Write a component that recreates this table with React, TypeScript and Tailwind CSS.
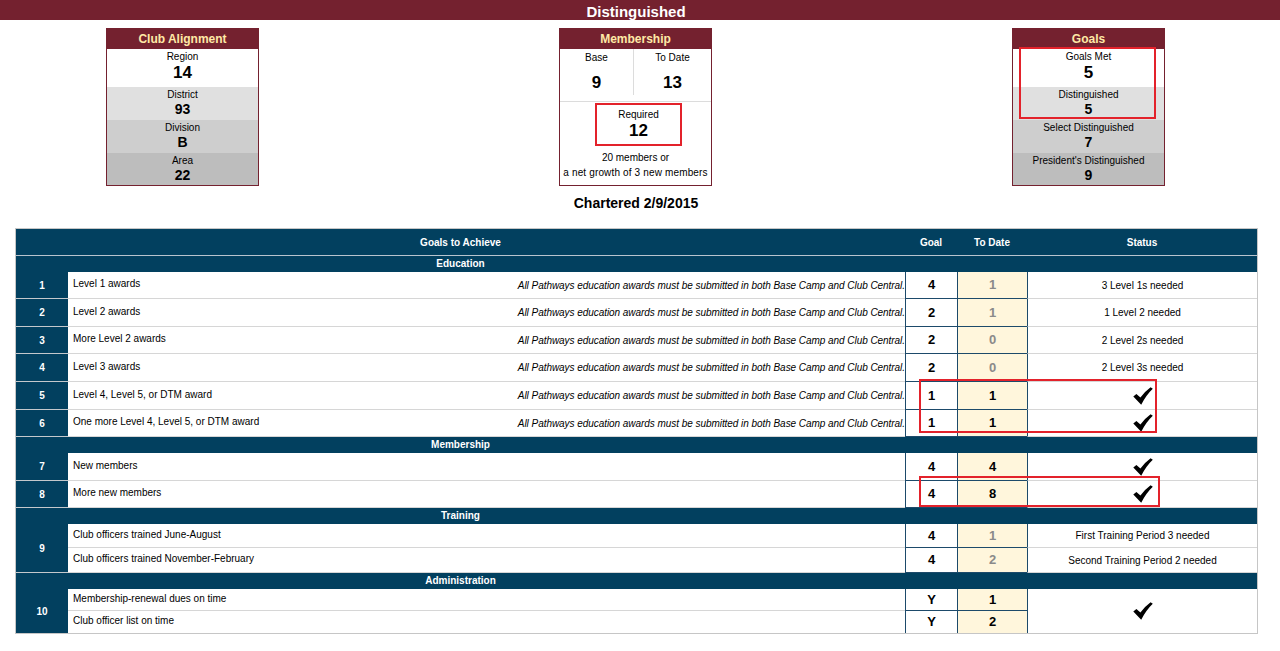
import React from "react";

const NAVY = "bg-[#02405f]";

function Check() {
  return (
    <svg width="20" height="18" viewBox="0 0 20 18" aria-hidden="true">
      <path d="M0.3 9.6 L3.4 6.9 L7.4 10.6 Q12 4.2 17.6 0.2 L19.8 1.8 Q13.2 8 8.2 17.8 Z" fill="#000" />
    </svg>
  );
}

const NOTE = "All Pathways education awards must be submitted in both Base Camp and Club Central.";

type RowData = {
  n: number;
  label: string;
  note?: boolean;
  goal: string;
  date: string;
  met: boolean;
  status: string | null;
  h: string;
};

const edu: RowData[] = [
  { n: 1, label: "Level 1 awards", note: true, goal: "4", date: "1", met: false, status: "3 Level 1s needed", h: "h-[27px]" },
  { n: 2, label: "Level 2 awards", note: true, goal: "2", date: "1", met: false, status: "1 Level 2 needed", h: "h-[28px]" },
  { n: 3, label: "More Level 2 awards", note: true, goal: "2", date: "0", met: false, status: "2 Level 2s needed", h: "h-[27px]" },
  { n: 4, label: "Level 3 awards", note: true, goal: "2", date: "0", met: false, status: "2 Level 3s needed", h: "h-[28px]" },
  { n: 5, label: "Level 4, Level 5, or DTM award", note: true, goal: "1", date: "1", met: true, status: null, h: "h-[28px]" },
  { n: 6, label: "One more Level 4, Level 5, or DTM award", note: true, goal: "1", date: "1", met: true, status: null, h: "h-[27px]" },
];

const mem: RowData[] = [
  { n: 7, label: "New members", goal: "4", date: "4", met: true, status: null, h: "h-[28px]" },
  { n: 8, label: "More new members", goal: "4", date: "8", met: true, status: null, h: "h-[27px]" },
];

function NumCell({ n }: { n: number }) {
  return (
    <div className={`w-[52px] shrink-0 ${NAVY} border-b border-[#c4c8cc] flex items-center justify-center text-white font-bold text-[10px]`}>
      {n}
    </div>
  );
}

function Desc({ label, note }: { label: string; note?: boolean }) {
  return (
    <div className="w-[837px] shrink-0 flex items-center justify-between border-b border-[#d6d6d6] overflow-hidden">
      <span className="pl-[5px] pb-[3px] text-[10px] whitespace-nowrap">{label}</span>
      {note && <span className="italic text-[10px] whitespace-nowrap tracking-[-0.05px]">{NOTE}</span>}
    </div>
  );
}

function GoalCells({ goal, date, met }: { goal: string; date: string; met: boolean }) {
  return (
    <>
      <div className="w-[52px] shrink-0 bg-white border-l border-b border-[#1d4a6a] flex items-center justify-center font-bold text-[13px]">
        {goal}
      </div>
      <div
        className={`w-[70px] shrink-0 bg-[#fff6dc] border-l border-b border-[#1d4a6a] flex items-center justify-center font-bold text-[13px] ${
          met ? "text-black" : "text-[#8a8a8a]"
        }`}
      >
        {date}
      </div>
    </>
  );
}

function Status({ status }: { status: string | null }) {
  return (
    <div className="w-[230px] shrink-0 border-l border-l-[#1d4a6a] border-b border-b-[#d6d6d6] flex items-center justify-center text-[10px]">
      {status ?? <Check />}
    </div>
  );
}

function Row({ r }: { r: RowData }) {
  return (
    <div className={`flex ${r.h}`}>
      <NumCell n={r.n} />
      <Desc label={r.label} note={r.note} />
      <GoalCells goal={r.goal} date={r.date} met={r.met} />
      <Status status={r.status} />
    </div>
  );
}

function Band({ title }: { title: string }) {
  return (
    <div className={`h-[16px] ${NAVY} flex`}>
      <div className="w-[889px] text-center text-white font-bold text-[10px] leading-[16px]">{title}</div>
    </div>
  );
}

function StatBox({
  title,
  rows,
  overlay,
}: {
  title: string;
  rows: { label: string; value: string; big?: boolean; bg: string; h: string }[];
  overlay?: boolean;
}) {
  return (
    <div className="relative w-[153px] border border-[#74212f] bg-white">
      <div className="h-[20px] bg-[#74212f] flex items-center justify-center text-[12px] font-bold text-[#ffe9a6]">
        {title}
      </div>
      {rows.map((r) => (
        <div key={r.label} className={`${r.h} ${r.bg} flex flex-col items-center pt-[2px]`}>
          <div className="text-[10px] leading-[12px]">{r.label}</div>
          {r.big ? (
            <div className="text-[17px] leading-[20px] font-bold">{r.value}</div>
          ) : (
            <div className="text-[14px] leading-[16px] font-bold">{r.value}</div>
          )}
        </div>
      ))}
      {overlay && (
        <div className="absolute left-[6px] top-[18px] w-[137px] h-[72px] border-2 border-[#e3222b]" />
      )}
    </div>
  );
}

export default function App() {
  return (
    <div className="w-[1280px] h-[651px] bg-white text-black overflow-hidden font-['Liberation_Sans',Arial,sans-serif]">
      <div className="h-[20px] bg-[#74212f] flex items-center justify-center pr-[8px] pt-[3px]">
        <span className="text-white font-bold text-[15px] leading-[18px]">Distinguished</span>
      </div>

      <div className="w-[1272px]">
        <div className="mt-[8px] flex justify-center gap-[300px] pr-[1px]">
          <StatBox
            title="Club Alignment"
            rows={[
              { label: "Region", value: "14", big: true, bg: "bg-white", h: "h-[38px]" },
              { label: "District", value: "93", bg: "bg-[#e0e0e0]", h: "h-[33px]" },
              { label: "Division", value: "B", bg: "bg-[#cecece]", h: "h-[33px]" },
              { label: "Area", value: "22", bg: "bg-[#bdbdbd]", h: "h-[32px]" },
            ]}
          />

          <div className="w-[153px] border border-[#74212f] bg-white">
            <div className="h-[20px] bg-[#74212f] flex items-center justify-center text-[12px] font-bold text-[#ffe9a6]">
              Membership
            </div>
            <div className="h-[53px] flex border-b border-[#dcdcdc]">
              <div className="w-[74px] h-[46px] border-r border-[#dcdcdc] flex flex-col items-center pt-[3px]">
                <div className="text-[10px] leading-[12px]">Base</div>
                <div className="mt-[9px] text-[17px] leading-[20px] font-bold">9</div>
              </div>
              <div className="flex-1 flex flex-col items-center pt-[3px]">
                <div className="text-[10px] leading-[12px]">To Date</div>
                <div className="mt-[9px] text-[17px] leading-[20px] font-bold">13</div>
              </div>
            </div>
            <div className="flex flex-col items-center">
              <div className="mt-[1px] ml-[6px] w-[87px] h-[43px] border-2 border-[#e3222b] flex flex-col items-center pt-[4px]">
                <div className="text-[10px] leading-[12px]">Required</div>
                <div className="text-[17px] leading-[20px] font-bold">12</div>
              </div>
              <div className="mt-[4px] text-[10px] leading-[15px]">20 members or</div>
              <div className="text-[10px] leading-[15px] tracking-[0.15px] whitespace-nowrap mb-[5px]">
                a net growth of 3 new members
              </div>
            </div>
          </div>

          <StatBox
            title="Goals"
            overlay
            rows={[
              { label: "Goals Met", value: "5", big: true, bg: "bg-white", h: "h-[38px]" },
              { label: "Distinguished", value: "5", bg: "bg-[#e0e0e0]", h: "h-[33px]" },
              { label: "Select Distinguished", value: "7", bg: "bg-[#cecece]", h: "h-[33px]" },
              { label: "President's Distinguished", value: "9", bg: "bg-[#bdbdbd]", h: "h-[32px]" },
            ]}
          />
        </div>

        <div className="mt-[9px] text-center text-[14px] leading-[16px] font-bold">Chartered 2/9/2015</div>

        <div className="relative mt-[17px] mx-[15px] w-[1243px] border border-[#c6c6c6]">
          <div className={`h-[27px] ${NAVY} border-b border-[#b8c4ce] flex items-center text-white font-bold text-[10px]`}>
            <div className="w-[889px] text-center">Goals to Achieve</div>
            <div className="w-[52px] text-center">Goal</div>
            <div className="w-[70px] text-center">To Date</div>
            <div className="w-[230px] text-center">Status</div>
          </div>

          <Band title="Education" />
          {edu.map((r) => (
            <Row key={r.n} r={r} />
          ))}

          <Band title="Membership" />
          {mem.map((r) => (
            <Row key={r.n} r={r} />
          ))}

          <Band title="Training" />
          <div className="flex h-[49px]">
            <NumCell n={9} />
            <div className="flex flex-col">
              <div className="flex h-[24px]">
                <Desc label="Club officers trained June-August" />
                <GoalCells goal="4" date="1" met={false} />
                <Status status="First Training Period 3 needed" />
              </div>
              <div className="flex h-[25px]">
                <Desc label="Club officers trained November-February" />
                <GoalCells goal="4" date="2" met={false} />
                <Status status="Second Training Period 2 needed" />
              </div>
            </div>
          </div>

          <Band title="Administration" />
          <div className="flex h-[44px]">
            <div className={`w-[52px] shrink-0 ${NAVY} flex items-center justify-center text-white font-bold text-[10px]`}>10</div>
            <div className="flex flex-col">
              <div className="flex h-[22px]">
                <Desc label="Membership-renewal dues on time" />
                <GoalCells goal="Y" date="1" met={true} />
              </div>
              <div className="flex h-[22px]">
                <div className="w-[837px] shrink-0 flex items-center">
                  <span className="pl-[5px] pb-[3px] text-[10px] whitespace-nowrap">Club officer list on time</span>
                </div>
                <div className="w-[52px] shrink-0 bg-white border-l border-[#1d4a6a] flex items-center justify-center font-bold text-[13px]">Y</div>
                <div className="w-[70px] shrink-0 bg-[#fff6dc] border-l border-[#1d4a6a] flex items-center justify-center font-bold text-[13px]">2</div>
              </div>
            </div>
            <div className="w-[230px] shrink-0 border-l border-[#1d4a6a] flex items-center justify-center">
              <Check />
            </div>
          </div>

          <div className="absolute left-[903px] top-[150px] w-[238px] h-[54px] border-2 border-[#e3222b]" />
          <div className="absolute left-[903px] top-[247px] w-[241px] h-[31px] border-2 border-[#e3222b]" />
        </div>
      </div>
    </div>
  );
}
